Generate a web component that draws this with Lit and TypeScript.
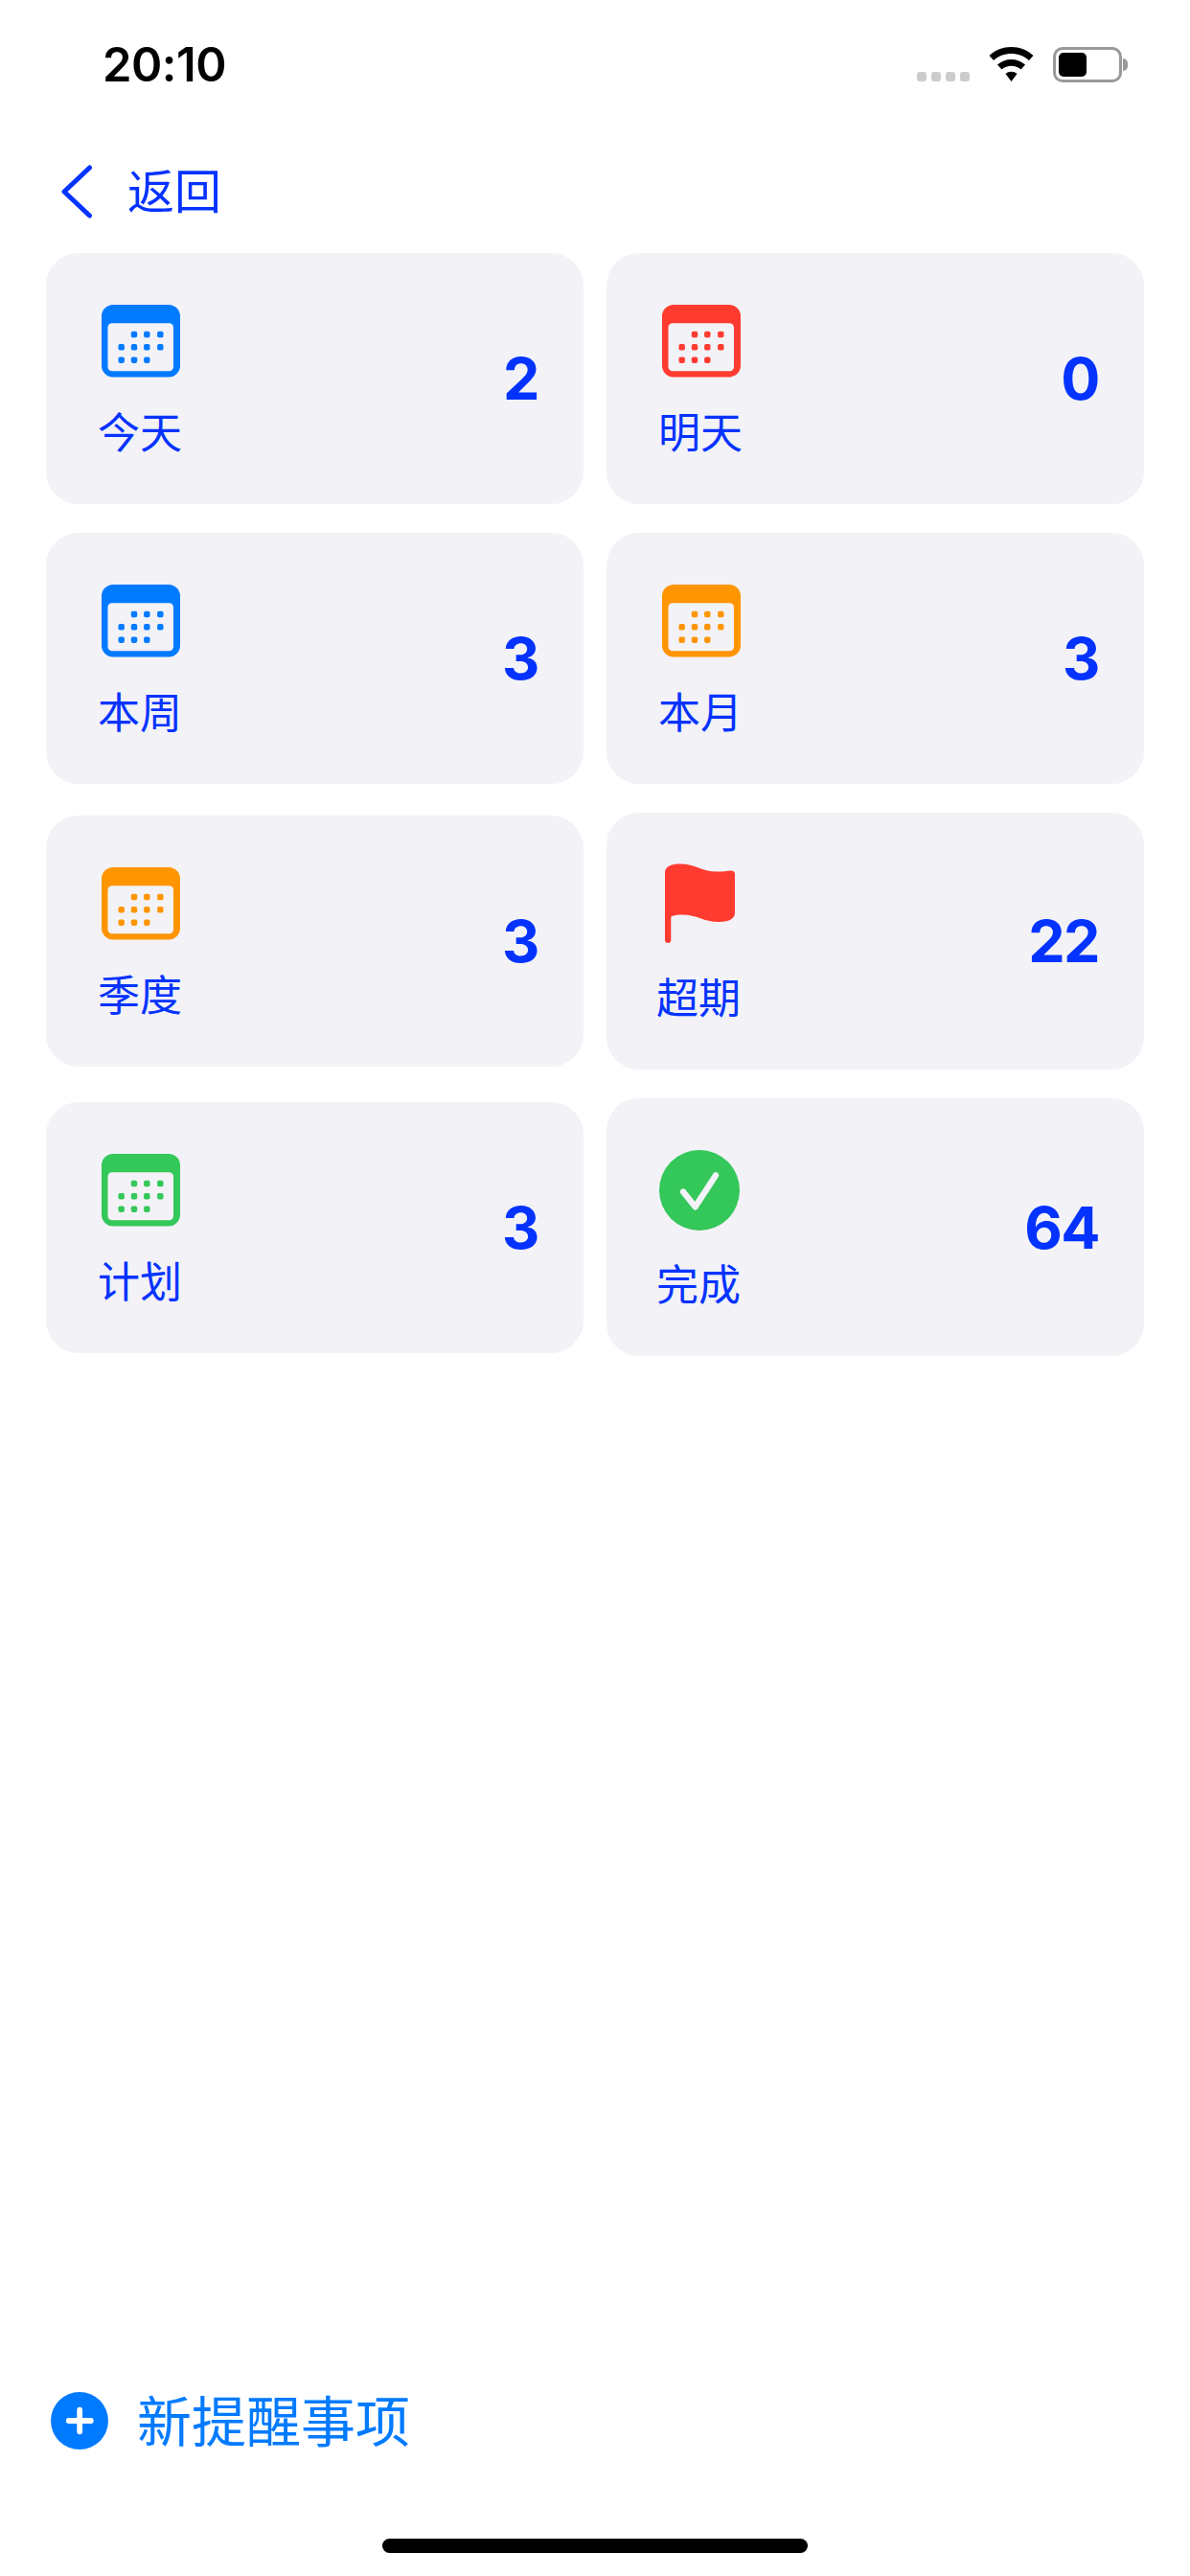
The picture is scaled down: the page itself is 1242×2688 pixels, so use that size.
import { LitElement, html, css, svg } from "lit";
import { customElement } from "lit/decorators.js";

type Kind = "cal" | "flag" | "check";
interface Item { label: string; count: number; kind: Kind; color: string; }

const BLUE = "#007aff", RED = "#ff3b30", ORANGE = "#ff9500", GREEN = "#34c759";
const ITEMS: Item[] = [
  { label: "今天", count: 2, kind: "cal", color: BLUE },
  { label: "明天", count: 0, kind: "cal", color: RED },
  { label: "本周", count: 3, kind: "cal", color: BLUE },
  { label: "本月", count: 3, kind: "cal", color: ORANGE },
  { label: "季度", count: 3, kind: "cal", color: ORANGE },
  { label: "超期", count: 22, kind: "flag", color: RED },
  { label: "计划", count: 3, kind: "cal", color: GREEN },
  { label: "完成", count: 64, kind: "check", color: GREEN },
];

const DOTS: [number, number][] = [
  [34, 31], [47.3, 31], [61.3, 31],
  [20.7, 44.3], [34, 44.3], [47.3, 44.3], [61.3, 44.3],
  [20.7, 57.7], [34, 57.7], [47.3, 57.7],
];

function icon(kind: Kind, color: string) {
  if (kind === "flag") {
    return html`<svg class="flag" width="73" height="83" viewBox="0 0 73 83">
      <path fill=${color} d="M0 10C0 3 6 .5 16 .5C32 .5 38 8.5 54 8.5C60 8.5 65 8 69 7.5C71.5 7.5 73 9 73 11V52C73 58 66 61 56 61C40 61 34 53.5 18 53.5C13 53.5 9 54 6.3 55.5V80C6.3 82 5 83 3.2 83C1.3 83 0 82 0 80Z"/>
    </svg>`;
  }
  if (kind === "check") {
    return html`<svg class="check" width="84" height="84" viewBox="0 0 84 84">
      <circle cx="42" cy="42" r="42" fill=${color}/>
      <path d="M25 43.6L37.6 59.3L59 26.4" fill="none" stroke="#f2f2f7" stroke-width="6.4" stroke-linecap="round" stroke-linejoin="round"/>
    </svg>`;
  }
  return html`<svg class="cal" width="82" height="76" viewBox="0 0 82 76">
    <rect width="82" height="75.5" rx="12" fill=${color}/>
    <rect x="6.5" y="19.3" width="68.5" height="50" rx="4.5" fill="#f2f2f7"/>
    ${DOTS.map(([x, y]) => svg`<rect x=${x - 3.2} y=${y - 3.2} width="6.4" height="6.4" rx="1.8" fill=${color}/>`)}
  </svg>`;
}

@customElement("app-root")
export class AppRoot extends LitElement {
  static styles = css`
    :host {
      display: flex;
      flex-direction: column;
      width: 1242px;
      height: 2688px;
      background: #fff;
      font-family: "Noto Sans CJK SC", "Liberation Sans", sans-serif;
      color: #0433ff;
      overflow: hidden;
    }
    .status {
      height: 150px;
      box-sizing: border-box;
      padding: 49px 71px 0 107px;
      display: flex;
      align-items: flex-start;
    }
    .time {
      font-family: Inter, "Liberation Sans", sans-serif;
      font-weight: 600;
      font-size: 49px;
      line-height: 37px;
      letter-spacing: -0.5px;
      color: #000;
      margin-right: auto;
    }
    .signal {
      display: flex;
      gap: 5px;
      margin-top: 26px;
    }
    .signal i {
      width: 10px;
      height: 10px;
      border-radius: 3px;
      background: #ccc;
    }
    .wifi { margin-left: 20px; display: block; }
    .battery {
      margin-left: 20px;
      width: 72px;
      height: 37px;
      box-sizing: border-box;
      border: 3px solid #999;
      border-radius: 10px;
      padding: 3px;
      position: relative;
    }
    .battery b {
      display: block;
      width: 29px;
      height: 25px;
      background: #000;
      border-radius: 5px;
    }
    .battery::after {
      content: "";
      position: absolute;
      left: 70px;
      top: 9px;
      width: 5px;
      height: 13px;
      background: #999;
      border-radius: 0 6px 6px 0;
    }
    .nav {
      height: 100px;
      margin-bottom: 14px;
      padding-left: 64px;
      display: flex;
      align-items: center;
      gap: 36px;
    }
    .nav span { font-size: 49px; line-height: 60px; margin-bottom: 6px; }
    .grid {
      display: grid;
      grid-template-columns: 561px 561px;
      column-gap: 24px;
      row-gap: 30px;
      padding: 0 48px;
      align-items: center;
    }
    .card {
      background: #f2f2f7;
      border-radius: 34px;
      display: flex;
      align-items: center;
      justify-content: space-between;
      padding: 54px 47px 46px 56px;
    }
    .card.wide { padding-left: 52px; }
    .col { display: flex; flex-direction: column; align-items: flex-start; }
    .col svg { display: block; }
    .cal { margin-left: 2px; }
    .flag { margin-left: 9px; margin-top: -1px; }
    .check { margin-left: 3px; margin-bottom: -1px; }
    .label {
      font-size: 44px;
      line-height: 56px;
      margin: 27px 0 3px -2px;
    }
    .wide .label { margin-left: 0; }
    .count {
      font-family: Inter, "Liberation Sans", sans-serif;
      font-weight: 700;
      font-size: 61px;
      line-height: 72px;
      letter-spacing: -1.5px;
      margin-bottom: 8px;
    }
    .footer {
      margin-top: auto;
      padding-left: 53px;
      display: flex;
      align-items: center;
      gap: 30px;
      color: #007aff;
      font-size: 57px;
    }
    .footer svg { display: block; }
    .footer span { line-height: 54px; margin-bottom: 6px; }
    .home {
      align-self: center;
      width: 444px;
      height: 15px;
      border-radius: 8px;
      background: #000;
      margin: 93px 0 24px;
    }
  `;

  render() {
    return html`
      <div class="status">
        <span class="time">20:10</span>
        <div class="signal"><i></i><i></i><i></i><i></i></div>
        <svg class="wifi" width="47" height="36" viewBox="0 0 47 36" fill="#000">
          <path d="M.5 9C13-3 34-3 46.5 9L42 14C32 4.5 15 4.5 5 14Z"/>
          <path d="M9 18.5C17 11 30 11 38 18.5L33.5 23.5C28 18.5 19 18.5 13.5 23.5Z"/>
          <path d="M17.5 28C21 25 26 25 29.5 28L23.5 36Z"/>
        </svg>
        <div class="battery"><b></b></div>
      </div>
      <div class="nav">
        <svg width="33" height="56" viewBox="0 0 33 56">
          <path d="M29.5 3L3 28L29.5 53" fill="none" stroke="#0433ff" stroke-width="5" stroke-linecap="round" stroke-linejoin="round"/>
        </svg>
        <span>返回</span>
      </div>
      <div class="grid">
        ${ITEMS.map(
          (it) => html`
            <div class="card ${it.kind === "cal" ? "" : "wide"}">
              <div class="col">
                ${icon(it.kind, it.color)}
                <span class="label">${it.label}</span>
              </div>
              <span class="count">${it.count}</span>
            </div>
          `
        )}
      </div>
      <div class="footer">
        <svg width="60" height="60" viewBox="0 0 60 60">
          <circle cx="30" cy="30" r="30" fill="#007aff"/>
          <path d="M18.8 30H41.8M30.2 18.7V41.3" stroke="#fff" stroke-width="5.8" stroke-linecap="round"/>
        </svg>
        <span>新提醒事项</span>
      </div>
      <div class="home"></div>
    `;
  }
}
